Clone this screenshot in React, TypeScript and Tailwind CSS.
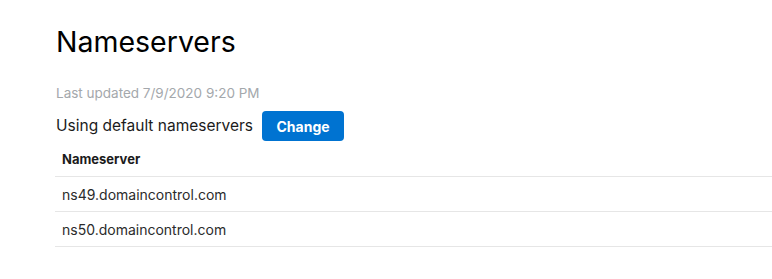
const rows = ['ns49.domaincontrol.com', 'ns50.domaincontrol.com'];

export default function App() {
  return (
    <div className="w-[772px] h-[279px] overflow-hidden bg-white pl-[55px] pt-[22px] font-['Inter',sans-serif] text-[#111]">
      <h1 className="pl-px text-[28.5px] leading-[40px] font-normal text-black">Nameservers</h1>
      <p className="mt-[22px] pl-px text-[13.5px] leading-[18px] text-[#a4a8ac]">Last updated 7/9/2020 9:20 PM</p>
      <div className="mt-[9px] pl-px flex items-center gap-[9px]">
        <span className="text-[15.5px] text-[#1b1b1b]">Using default nameservers</span>
        <button className="h-[30px] w-[82px] rounded-[4px] bg-[#0073d1] text-white text-[14px] font-bold">
          Change
        </button>
      </div>
      <table className="mt-px w-[717px] border-collapse text-left">
        <thead>
          <tr className="border-b border-[#e6e6e6]">
            <th className="h-[34px] px-[7px] pt-[2px] text-[13px] font-bold text-[#1b1b1b]">Nameserver</th>
          </tr>
        </thead>
        <tbody>
          {rows.map((r) => (
            <tr key={r} className="border-b border-[#e6e6e6]">
              <td className="h-[35px] px-[7px] pt-px text-[14px] text-[#2b2b2b]">{r}</td>
            </tr>
          ))}
        </tbody>
      </table>
    </div>
  );
}
